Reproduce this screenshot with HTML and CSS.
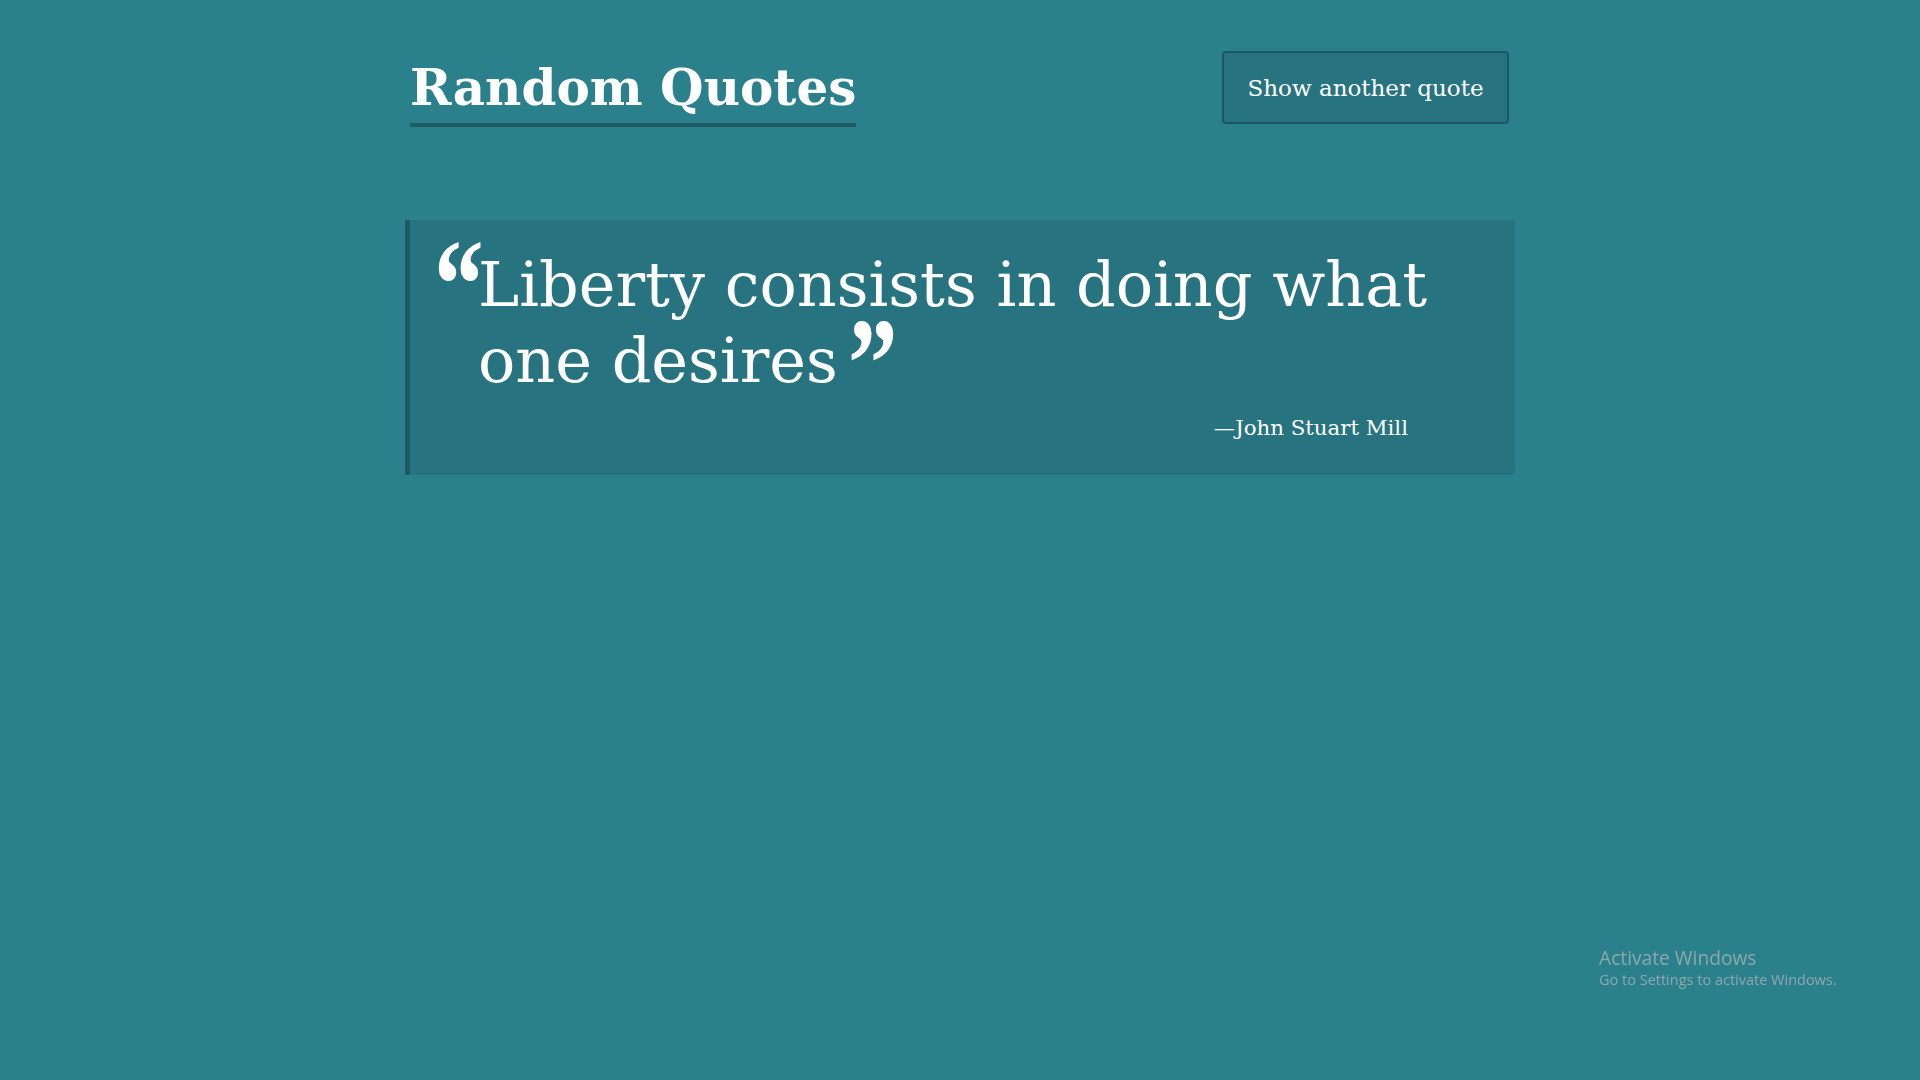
FILE: index.html
```html
<!DOCTYPE html>
<html lang="en">
<head>
<meta charset="utf-8">
<title>Random Quotes</title>
<link rel="stylesheet" href="styles.css">
</head>
<body>
<div class="container">
  <header class="header">
    <h1 class="title">Random Quotes</h1>
    <button class="btn" type="button">Show another quote</button>
  </header>
  <blockquote class="quote">
    <p class="quote-text"><span class="mark-open">&ldquo;</span>Liberty consists in doing what one desires <span class="mark-close">&rdquo;</span></p>
    <footer class="quote-author">&mdash;John Stuart Mill</footer>
  </blockquote>
</div>
<div class="watermark">
  <div class="wm-title">Activate Windows</div>
  <div class="wm-sub">Go to Settings to activate Windows.</div>
</div>
</body>
</html>
```
FILE: styles.css
```css
* { box-sizing: border-box; }
html, body { height: 100%; }
body {
  margin: 0;
  background: #2a808b;
  color: #ffffff;
  font-family: "DejaVu Serif", "Liberation Serif", serif;
}
.container {
  width: 1110px;
  margin: 0 auto;
}
.header {
  display: flex;
  justify-content: space-between;
  align-items: flex-start;
  padding-top: 41px;
}
.title {
  margin: 17px 0 0 5px;
  font-size: 50px;
  line-height: 60px;
  font-weight: 700;
  padding-bottom: 5px;
  border-bottom: 4px solid #1f5c64;
}
.btn {
  margin: 10px 6px 0 0;
  width: 287px;
  height: 73px;
  background: #277480;
  border: 2px solid #1d5860;
  border-radius: 4px;
  color: #ffffff;
  font-family: "DejaVu Serif", "Liberation Serif", serif;
  font-size: 23px;
  padding: 0;
}
.quote {
  margin: 93px 0 0 0;
  background: #277480;
  border-left: 5px solid #1d5a62;
  border-radius: 0 4px 4px 0;
  padding: 27px 20px 32px 68px;
}
.quote-text {
  position: relative;
  margin: 0;
  font-size: 62px;
  line-height: 76px;
  max-width: 990px;
}
.mark-open {
  position: absolute;
  left: -44px;
  top: -27px;
  font-family: "Liberation Serif", serif;
  font-size: 129px;
  font-weight: 700;
  line-height: 1;
  transform: scaleX(0.77);
  transform-origin: left top;
}
.mark-close {
  display: inline-block;
  position: relative;
  top: 25px;
  margin-left: -10px;
  font-family: "Liberation Serif", serif;
  font-size: 129px;
  font-weight: 700;
  line-height: 0;
  transform: scaleX(0.77);
  transform-origin: left center;
}
.quote-author {
  text-align: right;
  padding-right: 87px;
  margin-top: 14px;
  font-size: 21.3px;
  line-height: 30px;
}
.watermark {
  position: fixed;
  left: 1599px;
  top: 945px;
  color: #8fa8ab;
  font-family: "Open Sans", "Noto Sans", sans-serif;
}
.wm-title {
  font-size: 19.2px;
  line-height: 25px;
}
.wm-sub {
  font-size: 14.5px;
  line-height: 20px;
}
```
